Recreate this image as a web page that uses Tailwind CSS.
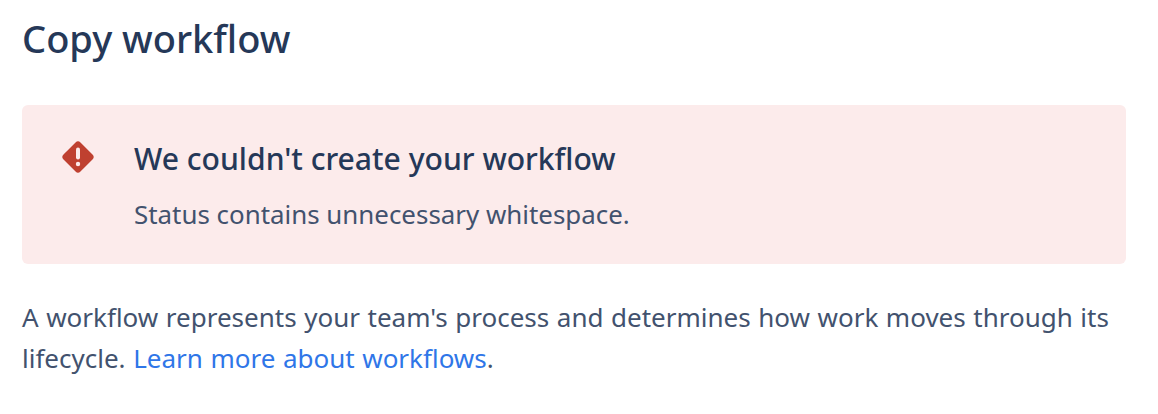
<!DOCTYPE html>
<html lang="en">
<head>
  <meta charset="UTF-8">
  <title>Copy workflow</title>
  <script src="https://cdn.jsdelivr.net/npm/@tailwindcss/browser@4"></script>
</head>
<body class="bg-white font-['Noto_Sans',sans-serif] text-[#253858]">
  <div class="w-[1158px] h-[414px] pl-[22px] pr-[32px] pt-[13px]">
    <h1 class="text-[38px] leading-[50px] font-medium text-[#253858]">Copy workflow</h1>
    <!-- error banner -->
    <div class="mt-[42px] h-[159px] rounded-[6px] bg-[#fcebeb] flex pl-[38px] pt-[35px]">
      <svg class="w-[36px] h-[36px] shrink-0 -mt-[1px]" viewBox="0 0 36 36">
        <rect x="6" y="6" width="24" height="24" rx="3.5" transform="rotate(45 18 18)" fill="#bf4030"/>
        <rect x="16" y="8.5" width="4" height="12" rx="2" fill="#fcebeb"/>
        <circle cx="18" cy="25" r="2.2" fill="#fcebeb"/>
      </svg>
      <div class="ml-[38px]">
        <h2 class="text-[30.1px] leading-[38px] font-medium">We couldn't create your workflow</h2>
        <p class="mt-[18px] text-[25.9px] leading-[36px] text-[#42526e]">Status contains unnecessary whitespace.</p>
      </div>
    </div>
    <p class="mt-[33px] text-[26px] leading-[41px] text-[#42526e] [word-spacing:0.8px]">A workflow represents your team's process and determines how work moves through its lifecycle. <a href="#" class="text-[#2f76e8]">Learn more about workflows</a>.</p>
  </div>
</body>
</html>
